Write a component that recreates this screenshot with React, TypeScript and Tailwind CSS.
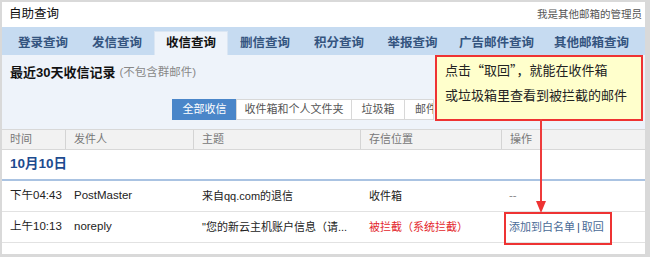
import React from 'react'

const font = { fontFamily: '"Liberation Sans", "Noto Sans CJK SC", sans-serif' }
const cjk = { fontFamily: '"Noto Sans CJK SC", "Liberation Sans", sans-serif' }

const tabs = [
  { name: '登录查询', w: 'w-[74px]' },
  { name: '发信查询', w: 'w-[74px]' },
  { name: '收信查询', w: 'w-[74px]', active: true },
  { name: '删信查询', w: 'w-[74px]' },
  { name: '积分查询', w: 'w-[74px]' },
  { name: '举报查询', w: 'w-[73px]' },
  { name: '广告邮件查询', w: 'w-[95px]' },
  { name: '其他邮箱查询', w: 'w-[95px]' },
]

const filters = [
  { name: '全部收信', w: 'w-[65px] justify-center', active: true },
  { name: '收件箱和个人文件夹', w: 'w-[116px] justify-center' },
  { name: '垃圾箱', w: 'w-[54px] justify-center' },
  { name: '邮件过滤', w: 'w-[30px] pl-[10px] overflow-hidden' },
]

const cols = 'grid grid-cols-[63px_128px_167px_141px_1fr]'

export default function App() {
  return (
    <div style={font} className="w-[650px] h-[257px] bg-[#d9d9d9] pt-[2px] pl-[2px] pr-[5px] pb-[3px]">
      <div className="relative h-full bg-white flex flex-col overflow-hidden">
        {/* header */}
        <div className="h-[25px] flex items-center justify-between pl-[7px] pr-[3px]">
          <span className="text-[12.5px] text-[#111]">自助查询</span>
          <span className="text-[10.5px] text-[#555]">我是其他邮箱的管理员</span>
        </div>

        {/* tabs */}
        <div className="h-[28px] bg-[#c6dbf1] flex items-end pl-[4px]">
          {tabs.map((t) => (
            <div
              key={t.name}
              className={`${t.w} h-[24px] flex items-center justify-center text-[12.5px] font-bold ${
                t.active ? 'bg-[#eef3fa] text-[#111] border-t border-x border-[#dbe6f3]' : 'text-[#34547f]'
              }`}
            >
              {t.name}
            </div>
          ))}
        </div>

        {/* summary */}
        <div className="h-[74px] bg-[#eef3fa] flex flex-col">
          <div className="h-[36px] flex items-center pl-[8px] gap-1">
            <span className="text-[13px] font-bold text-[#111]">最近30天收信记录</span>
            <span className="text-[11.5px] text-[#888]">(不包含群邮件)</span>
          </div>
          <div className="flex pl-[170px] mt-[8px]">
            {filters.map((f) => (
              <div
                key={f.name}
                className={`${f.w} h-[21px] flex items-center whitespace-nowrap text-[11px] border ${
                  f.active ? 'bg-[#4a86c9] border-[#4a86c9] text-white' : 'bg-white border-[#d8d8d8] -ml-px text-[#555]'
                }`}
              >
                {f.name}
              </div>
            ))}
          </div>
        </div>

        {/* table */}
        <div className={`${cols} h-[21px] bg-[#f2f2f2] border-y border-[#d8d8d8] text-[11px] text-[#777]`}>
          {['时间', '发件人', '主题', '存信位置', '操作'].map((h, i) => (
            <div key={h} className={`flex items-center pl-[8px] ${i > 0 ? 'border-l border-[#d4d4d4]' : ''}`}>
              {h}
            </div>
          ))}
        </div>
        <div className="h-[31px] flex items-center pl-[8px] border-b-2 border-[#aac3e2]">
          <span className="text-[13.5px] font-bold text-[#1d4b8f]">10月10日</span>
        </div>
        <div className={`${cols} h-[31px] border-b border-[#e2e2e2] text-[11.5px] text-[#222]`}>
          <div className="flex items-center pl-[8px]">下午04:43</div>
          <div className="flex items-center pl-[9px]">PostMaster</div>
          <div className="flex items-center pl-[9px] text-[11px]">来自qq.com的退信</div>
          <div className="flex items-center pl-[9px] text-[11px]">收件箱</div>
          <div className="flex items-center pl-[8px] text-[#888]">--</div>
        </div>
        <div className={`${cols} h-[31px] border-b border-[#e2e2e2] text-[11.5px] text-[#222]`}>
          <div className="flex items-center pl-[8px]">上午10:13</div>
          <div className="flex items-center pl-[9px]">noreply</div>
          <div className="flex items-center pl-[9px] text-[11px] whitespace-nowrap">"您的新云主机账户信息（请...</div>
          <div className="flex items-center pl-[9px] text-[11px] text-[#e3262b]">被拦截（系统拦截）</div>
          <div className="flex items-center pl-[8px] text-[11px] text-[#4a6a96] whitespace-nowrap">
            添加到白名单<span className="mx-[2px] text-[#2f4f7f]">|</span>取回
          </div>
        </div>

        {/* callout */}
        <div
          style={cjk}
          className="absolute left-[433px] top-[53px] w-[208px] h-[66px] bg-[#ffffcc] border-2 border-[#e33] flex flex-col pl-[8px] text-[13px] leading-[25px] text-[#222]"
        >
          <div>点击“取回”，就能在收件箱</div>
          <div>或垃圾箱里查看到被拦截的邮件</div>
        </div>
        <div className="absolute left-[538px] top-[117px] w-[2px] h-[86px] bg-[#ee3b3b]" />
        <svg className="absolute left-[534px] top-[199px]" width="10" height="12" viewBox="0 0 10 12">
          <polygon points="0,0 10,0 5,12" fill="#e33" />
        </svg>
        <div className="absolute left-[502px] top-[210px] w-[108px] h-[33px] border-2 border-[#e33]" />
      </div>
    </div>
  )
}
